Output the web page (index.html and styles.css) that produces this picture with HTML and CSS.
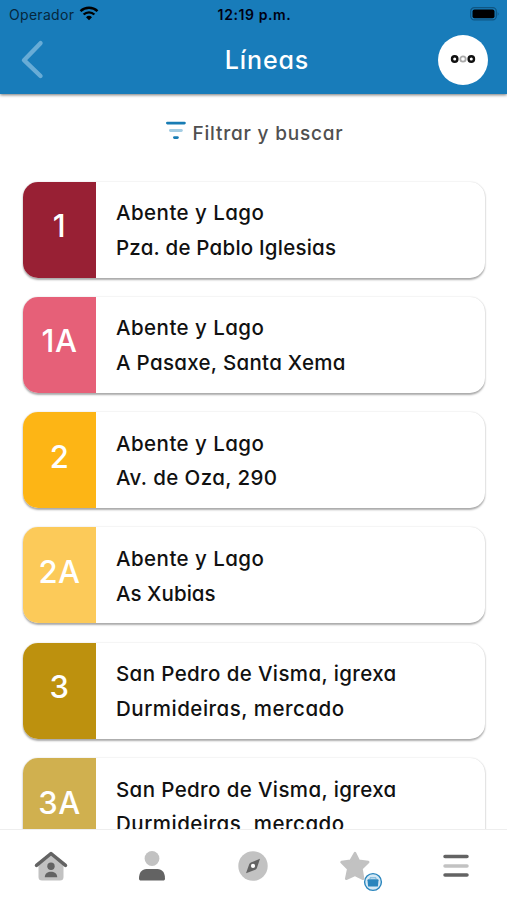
FILE: index.html
```html
<!DOCTYPE html>
<html lang="es">
<head>
<meta charset="utf-8">
<title>Líneas</title>
<link rel="stylesheet" href="styles.css">
</head>
<body>
<div class="app">
  <header class="header">
    <div class="status">
      <div class="carrier"><span>Operador</span>
        <svg width="20" height="15" viewBox="0 0 20 15"><path class="wifi" d="M1.500 5.200a12.300 12.300 0 0 1 17 0M4.600 8.500a7.800 7.800 0 0 1 10.800 0"/><path d="m10 14.200-3-3a4.300 4.300 0 0 1 6 0z"/></svg>
      </div>
      <span class="time">12:19 p.m.</span>
      <svg class="battery" width="30" height="14" viewBox="0 0 30 14"><rect x=".7" y=".7" width="25.6" height="12.2" rx="3.6" fill="none" stroke="#0f5683" stroke-width="1.2"/><rect x="2.5" y="2.400" width="22" height="8.800" rx="2" fill="#000"/><path d="M27.700 4.700q1.800 2.100 0 4.200z" fill="#0f5683"/></svg>
    </div>
    <div class="bar">
      <svg class="back" width="26" height="40" viewBox="0 0 26 40"><path d="M21.500 3.200 5 20.200 21.500 36" fill="none" stroke="#68acd6" stroke-width="4.400" stroke-linecap="round" stroke-linejoin="round"/></svg>
      <h1>Líneas</h1>
      <button class="more" aria-label="Más"><svg width="26" height="10" viewBox="0 0 26 10" fill="none" stroke-width="2.400"><circle cx="4.700" cy="4" r="2.700" stroke="#111"/><circle cx="13" cy="4" r="2.700" stroke="#aaa" stroke-width="1.800"/><circle cx="21.300" cy="4" r="2.700" stroke="#111"/></svg></button>
    </div>
  </header>
  <main class="content">
    <div class="filter">
      <svg width="22" height="20" viewBox="0 0 22 20" stroke-linecap="round" stroke-width="2.800"><path d="M2.400 3.100h17" stroke="#187cb4"/><path d="M5.400 10.500h11" stroke="#a4cde3"/><path d="M9.400 17.600h3" stroke="#187cb4"/></svg>
      <span>Filtrar y buscar</span>
    </div>
    <ul class="lines">
      <li class="card"><b class="num c1">1</b><div class="stops"><p><span class="t-abente">Abente y Lago</span></p><p><span class="t-pablo">Pza. de Pablo Iglesias</span></p></div></li>
      <li class="card"><b class="num c1a">1A</b><div class="stops"><p><span class="t-abente">Abente y Lago</span></p><p><span class="t-pasaxe">A Pasaxe, Santa Xema</span></p></div></li>
      <li class="card"><b class="num c2">2</b><div class="stops"><p><span class="t-abente">Abente y Lago</span></p><p><span class="t-oza">Av. de Oza, 290</span></p></div></li>
      <li class="card"><b class="num c2a">2A</b><div class="stops"><p><span class="t-abente">Abente y Lago</span></p><p><span class="t-xubias">As Xubias</span></p></div></li>
      <li class="card"><b class="num c3">3</b><div class="stops"><p><span class="t-visma">San Pedro de Visma, igrexa</span></p><p><span class="t-durmi">Durmideiras, mercado</span></p></div></li>
      <li class="card"><b class="num c3a">3A</b><div class="stops"><p><span class="t-visma">San Pedro de Visma, igrexa</span></p><p><span class="t-durmi">Durmideiras, mercado</span></p></div></li>
    </ul>
  </main>
  <nav class="tabs">
    <a><svg width="36" height="34" viewBox="0 0 36 34"><path d="M5.500 14.500 18 5l12.500 9.500V28a3.500 3.500 0 0 1-3.500 3.500H9A3.500 3.500 0 0 1 5.500 28z" fill="#c2c2c2"/><path d="M3.500 16.300 18 4.500l14.500 11.800" fill="none" stroke="#636363" stroke-width="3.500" stroke-linecap="round" stroke-linejoin="round"/><circle cx="18" cy="17.200" r="3.700" fill="#636363"/><path d="M11.800 28.200c0-7.200 12.400-7.200 12.400 0z" fill="#636363"/></svg></a>
    <a><svg width="36" height="34" viewBox="0 0 36 34"><circle cx="18" cy="9.500" r="7.400" fill="#c2c2c2"/><path d="M5 29.500c0-6 3-9.500 7.500-9.500h11c4.500 0 7.500 3.500 7.500 9.500 0 1.400-.7 2-2 2H7c-1.300 0-2-.6-2-2z" fill="#636363"/></svg></a>
    <a><svg width="36" height="34" viewBox="0 0 36 34"><circle cx="18" cy="17" r="14.700" fill="#c2c2c2"/><path fill-rule="evenodd" d="M25 9.800 21.900 19q-.4 1.200-1.600 1.700L11 24.200l3.300-9.200q.5-1.100 1.600-1.600z" fill="#636363"/><circle cx="18" cy="16.900" r="2.100" fill="#fff"/></svg></a>
    <a class="fav"><svg width="36" height="34" viewBox="0 0 36 34"><path d="m18 4 3.800 7.700 9.400 1.400-6.700 6.500 1.600 10.200-8.100-3.900-8.800 3.900 2-9.800-6.700-6.900 9.200-1.400z" fill="#c2c2c2" stroke="#c2c2c2" stroke-width="2.500" stroke-linejoin="round"/></svg>
      <svg class="badge" width="20" height="20" viewBox="0 0 20 20"><circle cx="10" cy="10" r="8.400" fill="#d5e9f5" stroke="#2985bd" stroke-width="1.400"/><path d="M5.500 7.300h9a1 1 0 0 1 1 1l-.6 6.300H5.100l-.6-6.300a1 1 0 0 1 1-1z" fill="#2985bd"/><path d="M7 7.300V5.800h6v1.500" fill="none" stroke="#71b0d7" stroke-width="1"/></svg></a>
    <a><svg width="36" height="34" viewBox="0 0 36 34" stroke-width="3.500" stroke-linecap="round"><path d="M7 7.600h22M7 26h22" stroke="#636363"/><path d="M7 16.900h22" stroke="#c2c2c2"/></svg></a>
  </nav>
</div>
</body>
</html>
```
FILE: styles.css
```css
* { box-sizing: border-box; }
body { margin: 0; background: #fff; font-family: Inter, "Liberation Sans", sans-serif; font-feature-settings: "cv11" 1; color: #111; }
h1, p, ul { margin: 0; padding: 0; font-weight: inherit; }
.app { height: 900px; display: flex; flex-direction: column; overflow: hidden; }
.header { flex: none; height: 94px; background: #187cba; box-shadow: 0 1px 3px rgba(0,0,0,.55); }
.status { height: 28px; display: grid; grid-template-columns: 1fr auto 1fr; align-items: center; padding: 0 7px 0 9px; font-size: 14px; font-feature-settings: normal; color: #06273c; }
.carrier { display: flex; align-items: center; gap: 5px; letter-spacing: .3px; }
.carrier svg { margin-top: -2px; }
.wifi { fill: none; stroke: #000; stroke-width: 2.4; }
.time { color: #001; font-weight: 600; letter-spacing: .6px; }
.battery { justify-self: end; }
.bar { height: 64px; display: grid; grid-template-columns: 50px 1fr 50px; align-items: center; padding: 0 19px; }
h1 { text-align: center; padding-left: 27px; color: #fff; font-size: 25px; font-weight: 500; letter-spacing: .9px; }
.more { width: 50px; height: 50px; padding: 0; border: 0; border-radius: 50%; background: #fff; display: flex; align-items: center; justify-content: center; }
.content { flex: 1; min-height: 0; overflow: hidden; padding: 0 22px 0 23px; }
.filter { height: 87.5px; padding-top: 26px; display: flex; justify-content: center; align-items: flex-start; gap: 6px; font-size: 19px; line-height: 28px; font-weight: 500; letter-spacing: .8px; color: #505050; }
.lines { list-style: none; display: flex; flex-direction: column; gap: 19.33px; }
.card { flex: none; height: 96px; display: flex; background: #fff; border-radius: 15px; box-shadow: 0 1.5px 2px rgba(0,0,0,.32), 0 0 2px rgba(0,0,0,.1); }
.num { width: 73px; border-radius: 15px 0 0 15px; padding-bottom: 8px; display: flex; align-items: center; justify-content: center; color: #fff; font-size: 31px; font-weight: 500; letter-spacing: .5px; }
.stops { padding: 14.5px 0 0 20px; font-size: 20.5px; font-weight: 500; line-height: 34.7px; white-space: nowrap; }
.t-abente { letter-spacing: .45px; }
.t-pablo { letter-spacing: .22px; }
.t-pasaxe { letter-spacing: .3px; }
.t-oza { letter-spacing: .4px; }
.t-xubias { letter-spacing: .05px; }
.t-visma { letter-spacing: .38px; }
.t-durmi { letter-spacing: .5px; }
.c1 { background: #982034; }
.c1a { background: #e66078; }
.c2 { background: #fdb515; }
.c2a { background: #fcca59; }
.c3 { background: #bd910e; }
.c3a { background: #d0b04f; }
.tabs { flex: none; height: 71px; border-top: 1px solid #eee; display: grid; grid-template-columns: repeat(5, 1fr); padding-top: 19px; background: #fff; }
.tabs a { display: flex; justify-content: center; align-items: flex-start; position: relative; }
.badge { position: absolute; left: 59px; top: 23px; }
```
